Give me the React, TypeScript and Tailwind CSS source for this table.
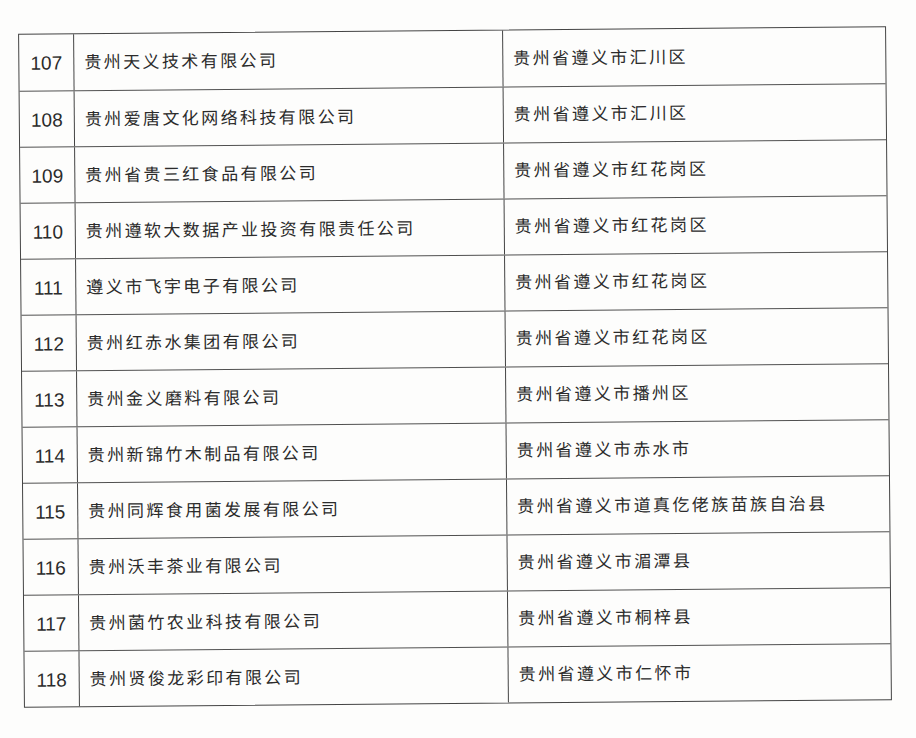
import React from "react";

const rows: [string, string, string][] = [
  ["107", "贵州天义技术有限公司", "贵州省遵义市汇川区"],
  ["108", "贵州爱唐文化网络科技有限公司", "贵州省遵义市汇川区"],
  ["109", "贵州省贵三红食品有限公司", "贵州省遵义市红花岗区"],
  ["110", "贵州遵软大数据产业投资有限责任公司", "贵州省遵义市红花岗区"],
  ["111", "遵义市飞宇电子有限公司", "贵州省遵义市红花岗区"],
  ["112", "贵州红赤水集团有限公司", "贵州省遵义市红花岗区"],
  ["113", "贵州金义磨料有限公司", "贵州省遵义市播州区"],
  ["114", "贵州新锦竹木制品有限公司", "贵州省遵义市赤水市"],
  ["115", "贵州同辉食用菌发展有限公司", "贵州省遵义市道真仡佬族苗族自治县"],
  ["116", "贵州沃丰茶业有限公司", "贵州省遵义市湄潭县"],
  ["117", "贵州菌竹农业科技有限公司", "贵州省遵义市桐梓县"],
  ["118", "贵州贤俊龙彩印有限公司", "贵州省遵义市仁怀市"],
];

export default function App() {
  return (
    <div
      className="w-[916px] h-[738px] bg-[#fdfdfc] overflow-hidden pt-[30px] pl-[21px]"
      style={{ fontFamily: '"Liberation Sans", "Noto Sans CJK SC", sans-serif' }}
    >
      <div className="w-[868px] border border-[#444444] rotate-[-0.5deg] text-[#2b2b2b]">
        {rows.map(([n, name, addr], i) => (
          <div
            key={n}
            className={`grid grid-cols-[55px_429px_1fr] h-[56px] ${i > 0 ? "border-t border-[#505050]" : ""}`}
          >
            <div className="flex items-center justify-center border-r border-[#444444] text-[19px] pt-[3px]">
              {n}
            </div>
            <div className="flex items-center border-r border-[#444444] pl-[10px] text-[17px] tracking-[2.4px] pt-[2px]">
              {name}
            </div>
            <div className="flex items-center pl-[10px] text-[17px] tracking-[2.4px] pt-[1px]">
              {addr}
            </div>
          </div>
        ))}
      </div>
    </div>
  );
}
